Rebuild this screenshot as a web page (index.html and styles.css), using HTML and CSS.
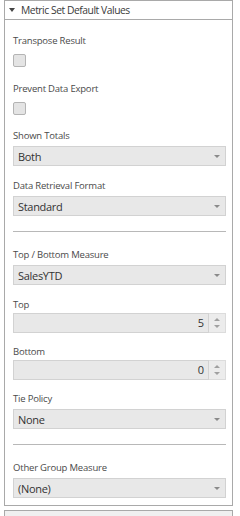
FILE: index.html
```html
<!DOCTYPE html>
<html>
<head>
<meta charset="utf-8">
<link rel="stylesheet" href="styles.css">
</head>
<body>
<div class="panel">
  <div class="panel-head"><span class="caret"></span><span class="title">Metric Set Default Values</span></div>
  <div class="panel-body">
    <div class="field field-check">
      <div class="label">Transpose Result</div>
      <span class="checkbox"></span>
    </div>
    <div class="field field-check last-check">
      <div class="label">Prevent Data Export</div>
      <span class="checkbox"></span>
    </div>
    <div class="field">
      <div class="label">Shown Totals</div>
      <div class="select"><span>Both</span><span class="arrow"></span></div>
    </div>
    <div class="field no-mb">
      <div class="label">Data Retrieval Format</div>
      <div class="select"><span>Standard</span><span class="arrow"></span></div>
    </div>
    <div class="sep"></div>
    <div class="field">
      <div class="label">Top / Bottom Measure</div>
      <div class="select"><span>SalesYTD</span><span class="arrow"></span></div>
    </div>
    <div class="field field-num">
      <div class="label">Top</div>
      <div class="number"><span class="num-val">5</span><span class="spin"><span class="up"></span><span class="down"></span></span></div>
    </div>
    <div class="field field-num">
      <div class="label">Bottom</div>
      <div class="number"><span class="num-val">0</span><span class="spin"><span class="up"></span><span class="down"></span></span></div>
    </div>
    <div class="field no-mb">
      <div class="label">Tie Policy</div>
      <div class="select"><span>None</span><span class="arrow"></span></div>
    </div>
    <div class="sep"></div>
    <div class="field no-mb">
      <div class="label">Other Group Measure</div>
      <div class="select"><span>(None)</span><span class="arrow"></span></div>
    </div>
  </div>
</div>
<div class="panel panel-next"></div>
</body>
</html>
```
FILE: styles.css
```css
html, body {
  margin: 0;
  padding: 0;
  background: #ffffff;
}
body {
  width: 240px;
  height: 516px;
  overflow: hidden;
  font-family: "Open Sans", "Noto Sans", sans-serif;
  color: #333;
}
.panel {
  margin-left: 4px;
  width: 229px;
  box-sizing: border-box;
  border: 1px solid #a9a9a9;
  background: #fff;
}
.panel-head {
  height: 19px;
  box-sizing: border-box;
  border-bottom: 1px solid #a9a9a9;
  display: flex;
  align-items: center;
  padding-left: 4px;
}
.caret {
  width: 0;
  height: 0;
  border-left: 3px solid transparent;
  border-right: 3px solid transparent;
  border-top: 4px solid #444;
  margin-right: 6px;
}
.title {
  font-size: 10.3px;
  color: #3a3a3a;
  letter-spacing: -0.45px;
  line-height: 18px;
}
.panel-body {
  display: flex;
  flex-direction: column;
  padding: 14px 6px 7px 8px;
}
.field {
  display: flex;
  flex-direction: column;
  margin-bottom: 13px;
}
.label {
  font-size: 9.5px;
  line-height: 14px;
  height: 14px;
  color: #4a4a4a;
  margin-bottom: 3px;
  letter-spacing: -0.2px;
}
.field-check .label {
  margin-bottom: 6px;
}
.field-check {
  margin-bottom: 15px;
}
.last-check {
  margin-bottom: 14px;
}
.checkbox {
  width: 13px;
  height: 13px;
  box-sizing: border-box;
  border: 1px solid #b4b4b4;
  border-radius: 2px;
  background: #e4e4e4;
}
.select {
  height: 20px;
  box-sizing: border-box;
  border: 1px solid #d2d2d2;
  background: #e8e8e8;
  display: flex;
  align-items: center;
  justify-content: space-between;
  padding: 0 5px 0 4px;
  font-size: 11px;
  letter-spacing: -0.3px;
  color: #333;
}
.arrow {
  width: 0;
  height: 0;
  border-left: 3px solid transparent;
  border-right: 3px solid transparent;
  border-top: 3px solid #8a8a8a;
}
.no-mb {
  margin-bottom: 0;
}
.sep {
  height: 1px;
  background: #b8b8b8;
  margin: 15px 0 16px 0;
}
.field-num .label {
  margin-bottom: 1px;
}
.field-num {
  margin-bottom: 12px;
}
.number {
  height: 20px;
  display: flex;
}
.num-val {
  flex: 1;
  box-sizing: border-box;
  border: 1px solid #d2d2d2;
  background: #e8e8e8;
  text-align: right;
  font-size: 11px;
  line-height: 18px;
  padding-right: 4px;
  color: #333;
}
.spin {
  width: 17px;
  box-sizing: border-box;
  border: 1px solid #dcdcdc;
  border-left: none;
  background: #ececec;
  display: flex;
  flex-direction: column;
  align-items: center;
  justify-content: center;
  gap: 4px;
}
.up {
  width: 0;
  height: 0;
  border-left: 3px solid transparent;
  border-right: 3px solid transparent;
  border-bottom: 3px solid #a0a0a0;
}
.down {
  width: 0;
  height: 0;
  border-left: 3px solid transparent;
  border-right: 3px solid transparent;
  border-top: 3px solid #a0a0a0;
}
.panel-next {
  margin-top: 4px;
  height: 8px;
  background: #f0f0f0;
}
```
